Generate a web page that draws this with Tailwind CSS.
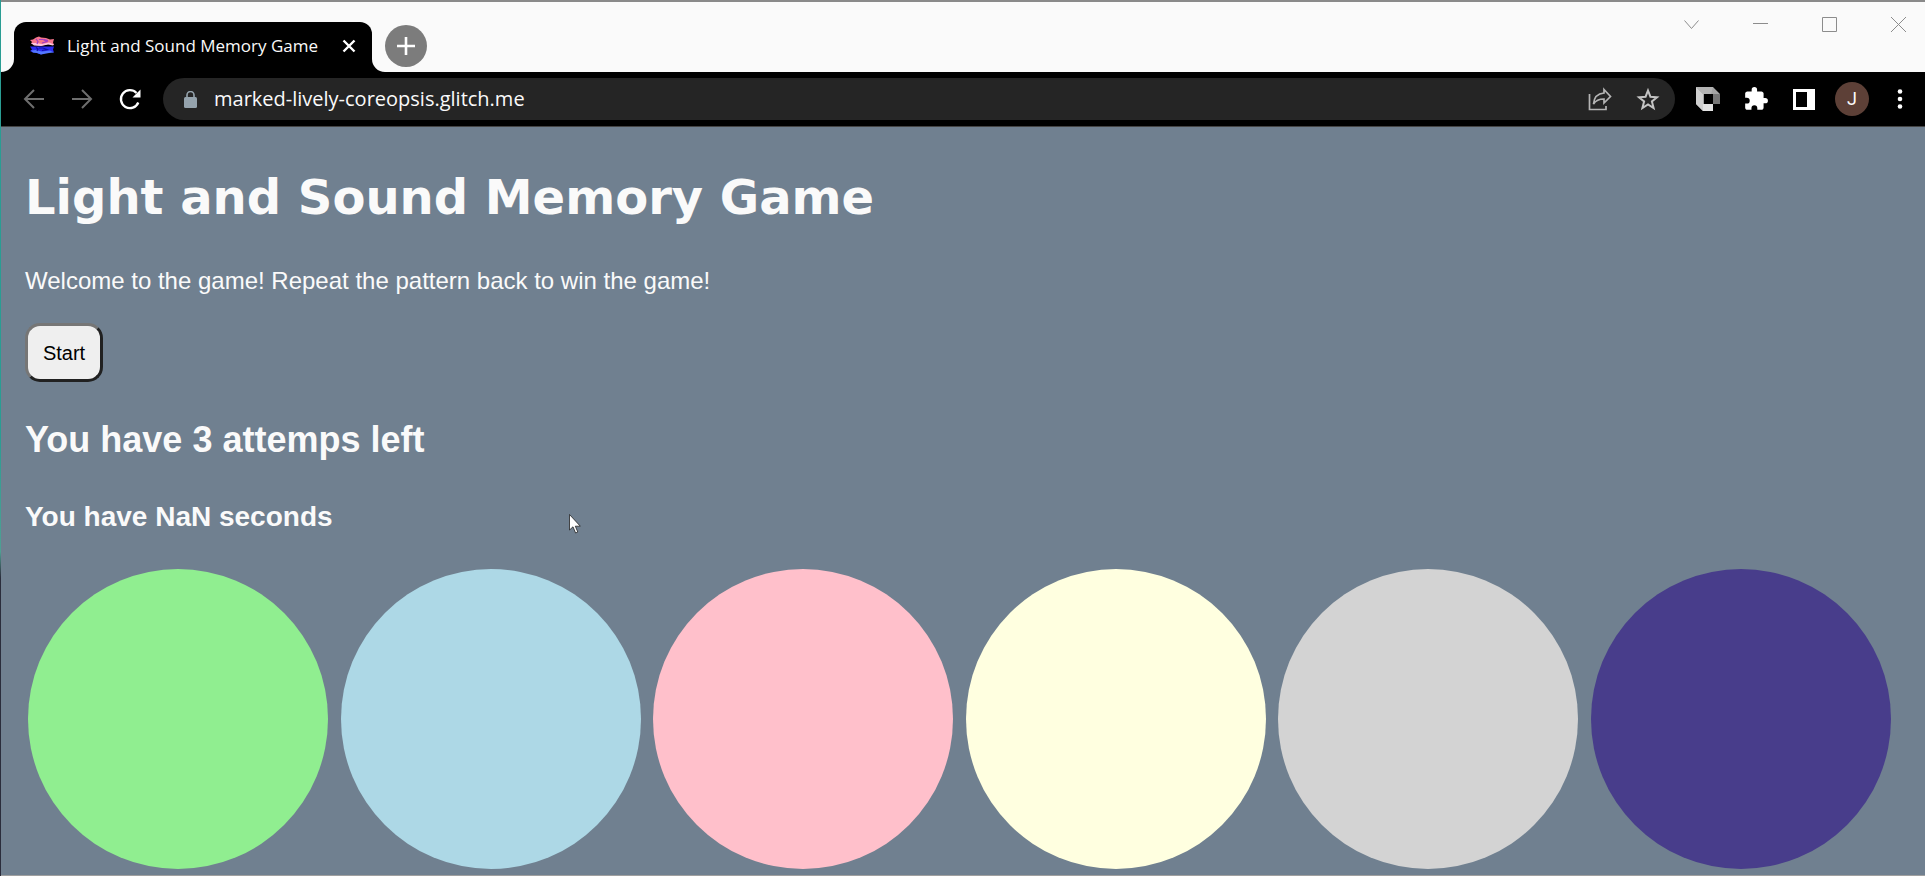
<!DOCTYPE html>
<html lang="en">
<head>
<meta charset="utf-8">
<meta name="viewport" content="width=device-width, initial-scale=1">
<title>Light and Sound Memory Game</title>
<script src="https://cdn.jsdelivr.net/npm/@tailwindcss/browser@4"></script>
</head>
<body class="flex min-h-screen bg-[#708090] font-['Liberation_Sans',Arial,sans-serif] text-[#fafafa]">
<div class="w-px shrink-0 bg-linear-to-b from-[#2a9d93] from-50% via-[#4f9f93] via-63% to-[#2b2d3c] to-66%"></div>
<div class="flex min-w-0 grow flex-col border-b border-[#a0a0a0]">
  <header class="font-['Open_Sans','Noto_Sans',sans-serif]">
    <!-- title bar -->
    <div class="flex h-[72px] items-end border-t-2 border-[#8a8a8a] bg-[#fafafa]">
      <svg class="size-[13px] shrink-0" viewBox="0 0 13 13"><path d="M13 0A13 13 0 0 1 0 13H13Z" fill="#000"/></svg>
      <div class="flex h-[50px] w-[358px] items-center rounded-t-[12px] bg-black pr-4 pb-[2px] pl-4">
        <svg class="size-6 shrink-0" viewBox="0 0 24 24">
          <path d="M0 6 3 5.500 6 3.500 9 2.500l2 1 5 .500 4 1.500L24 5l-1 3.500 1 2.500-5-1L12 11.500 5 11 1 9.500 2 8Z" fill="#f5768c"/>
          <path d="M1 9 6 9l6 1 7-1.500 5 2-1 1-5-1-7 1.500L4 11.500Z" fill="#ffc3df"/>
          <path d="M6 5 8 7.500 7 10M9 5.500h4l4 2-5 1.500M14 5.500l4 1" fill="none" stroke="#a43bc4" stroke-width="1.200"/>
          <path d="M0 12.500h24l-1 3 1 3-4-1-5 1.500-4 1.500-4-1.500-4-.500-3-1.500 2-1.500Z" fill="#2b2bf0"/>
          <path d="M1 16.500 6 16l6 1.500 8-1 4 2-5 .500-8 1.500-4-1.500-4-.500Z" fill="#5277ff"/>
          <path d="M6 13.500 8 15 7 17M9 14h4l4 1.500-5 1" fill="none" stroke="#1010a8" stroke-width="1.200"/>
        </svg>
        <span class="ml-[13px] grow text-[17px] leading-6 whitespace-nowrap">Light and Sound Memory Game</span>
        <button aria-label="Close tab" class="size-[14px] shrink-0"><svg viewBox="0 0 14 14" fill="none" stroke="#fff" stroke-width="2.400"><path d="m1.500 1.500 11 11m0-11-11 11"/></svg></button>
      </div>
      <svg class="size-[13px] shrink-0" viewBox="0 0 13 13"><path d="M0 0A13 13 0 0 0 13 13H0Z" fill="#000"/></svg>
      <button aria-label="New tab" class="mb-[5px] grid size-[42px] shrink-0 place-items-center rounded-full bg-[#7c7c7c]"><svg class="size-[18px]" viewBox="0 0 18 18" fill="none" stroke="#fff" stroke-width="2.600"><path d="M9 0v18M0 9h18"/></svg></button>
      <div class="mr-[19px] mb-[40px] ml-auto flex gap-[54px] text-[#8c8c8c]">
        <button aria-label="Search tabs" class="size-[15px]"><svg viewBox="0 0 15 15" fill="none" stroke="currentColor"><path d="m.500 3.500 7 8 7-8"/></svg></button>
        <button aria-label="Minimize" class="size-[15px]"><svg viewBox="0 0 15 15" fill="none" stroke="currentColor"><path d="M0 6.500h15"/></svg></button>
        <button aria-label="Maximize" class="size-[15px]"><svg viewBox="0 0 15 15" fill="none" stroke="currentColor"><path d="M.500.500h14v14H.500Z"/></svg></button>
        <button aria-label="Close window" class="size-[15px]"><svg viewBox="0 0 15 15" fill="none" stroke="currentColor"><path d="m0 0 15 15m0-15L0 15"/></svg></button>
      </div>
    </div>
    <!-- toolbar -->
    <div class="flex h-[55px] items-center border-b border-[#444] bg-black pr-px pl-[9px]">
      <button aria-label="Back" class="grid w-12 shrink-0 place-items-center"><svg class="size-6" viewBox="0 0 24 24" fill="none" stroke="#6e6e6e" stroke-width="2"><path d="M22 12H3M12 3l-9 9 9 9"/></svg></button>
      <button aria-label="Forward" class="grid w-12 shrink-0 place-items-center"><svg class="size-6" viewBox="0 0 24 24" fill="none" stroke="#6e6e6e" stroke-width="2"><path d="M2 12h19M12 3l9 9-9 9"/></svg></button>
      <button aria-label="Reload" class="grid w-12 shrink-0 place-items-center"><svg class="size-6" viewBox="0 0 24 24"><path d="M20.300 15.500A9 9 0 1 1 18.500 6" fill="none" stroke="#fff" stroke-width="2.300"/><path d="M22.500 2.500V10.500h-8Z" fill="#fff"/></svg></button>
      <div class="mx-[9px] flex h-[42px] grow items-center rounded-full bg-[#252525] pr-[15px] pl-[21px]">
        <svg class="h-[17px] w-[13px] shrink-0" viewBox="0 0 13 17"><rect y="6" width="13" height="11" rx="1.500" fill="#95a3ad"/><path d="M3 7V4a3.500 3.500 0 0 1 7 0v3" fill="none" stroke="#95a3ad" stroke-width="1.600"/></svg>
        <input aria-label="Address" value="marked-lively-coreopsis.glitch.me" class="ml-[17px] h-7 min-w-0 grow bg-transparent text-[20px] leading-7 outline-none">
        <button aria-label="Share" class="ml-6 size-6 shrink-0"><svg viewBox="0 0 24 24" fill="none" stroke="#b5b5b5" stroke-width="1.700"><path d="M1.500 7v15.500H18V19"/><path d="M16 2.500 22.500 9.500 16 16v-4c-5 0-8 1-10.500 5 .500-6 4-10.500 10.500-11Z"/></svg></button>
        <button aria-label="Bookmark" class="ml-6 size-6 shrink-0"><svg viewBox="0 0 24 24" fill="none" stroke="#c4c4c4" stroke-width="2"><path d="m12 3.500 2.400 6.200 6.600.500-5.100 4.200 1.700 6.600-5.600-3.600L6.400 21l1.700-6.600L3 10.200l6.600-.500Z"/></svg></button>
      </div>
      <button aria-label="Search image" class="grid w-12 shrink-0 place-items-center"><svg class="size-6" viewBox="0 0 24 24"><path d="M0 0h17l7 7v10h-7v7H7l-7-7Z" fill="#a5a5a5"/><path d="m0 0 7 7v17l-7-7Z" fill="#d0d0d0"/><path d="M0 0h17l-2 7H7Z" fill="#b4b4b4"/><path d="M17 7h7v10h-7Z" fill="#777"/><path d="M7 17h10v7H7Z" fill="#e4e4e4"/><path d="M8 7h9v10H8Z" fill="#000"/></svg></button>
      <button aria-label="Extensions" class="grid w-12 shrink-0 place-items-center"><svg class="size-[26px]" viewBox="0 0 24 24" fill="#fff"><path d="M20.500 11H19V7c0-1.100-.900-2-2-2h-4V3.500a2.500 2.500 0 0 0-5 0V5H4c-1.100 0-2 .900-2 2v3.800h1.500a2.700 2.700 0 0 1 0 5.400H2V20c0 1.100.900 2 2 2h3.800v-1.500a2.700 2.700 0 0 1 5.400 0V22H17c1.100 0 2-.900 2-2v-4h1.500a2.500 2.500 0 0 0 0-5Z"/></svg></button>
      <button aria-label="Side panel" class="grid w-12 shrink-0 place-items-center"><svg class="h-[21px] w-[22px]" viewBox="0 0 22 21"><path d="M0 0h22v21H0Zm3 3v15h11V3Z" fill="#fff" fill-rule="evenodd"/></svg></button>
      <button aria-label="Profile" class="grid w-12 shrink-0 place-items-center"><span class="grid size-[34px] place-items-center rounded-full bg-[#5d4037] font-['Roboto',sans-serif] text-[18px] leading-6">J</span></button>
      <button aria-label="Menu" class="grid w-12 shrink-0 place-items-center"><svg class="h-[20px] w-1" viewBox="0 0 4 20" overflow="visible" fill="#fff"><circle cx="2" cy="2.500" r="2.300"/><circle cx="2" cy="10" r="2.300"/><circle cx="2" cy="17.500" r="2.300"/></svg></button>
    </div>
  </header>

  <main class="grow px-6 pt-[41px] pb-[5px]">
    <h1 class="font-['DejaVu_Sans',Verdana,sans-serif] text-[48px] leading-[58px] font-bold">Light and Sound Memory Game</h1>
    <p class="mt-[41px] text-[24px] leading-[28px]">Welcome to the game! Repeat the pattern back to win the game!</p>
    <button class="mt-[28px] block h-[59px] w-[78px] rounded-[15px] border-[3px] border-t-[#767676] border-r-[#212121] border-b-[#212121] border-l-[#767676] bg-[#efefef] text-[20px] leading-6 text-black">Start</button>
    <h2 class="mt-[37px] text-[36px] leading-[42px] font-bold">You have 3 attemps left</h2>
    <h3 class="mt-[40px] text-[28px] leading-[32px] font-bold">You have NaN seconds</h3>
    <div class="mt-[36px] mr-[10px] ml-[3px] flex justify-between">
      <button aria-label="Green" class="size-[300px] rounded-full bg-[#90ee90]"></button>
      <button aria-label="Blue" class="size-[300px] rounded-full bg-[#add8e6]"></button>
      <button aria-label="Pink" class="size-[300px] rounded-full bg-[#ffc0cb]"></button>
      <button aria-label="Yellow" class="size-[300px] rounded-full bg-[#ffffe0]"></button>
      <button aria-label="Grey" class="size-[300px] rounded-full bg-[#d3d3d3]"></button>
      <button aria-label="Purple" class="size-[300px] rounded-full bg-[#483d8b]"></button>
    </div>
  </main>
</div>
<!-- mouse pointer -->
<svg class="pointer-events-none absolute top-[514px] left-[569px] h-[20px] w-[12px]" viewBox="0 0 12 20"><path d="M.500.500v15.500l3.500-3.200 2.600 6.200 2.200-1-2.500-5.800h5Z" fill="#fff" stroke="#222" stroke-width=".800"/></svg>
</body>
</html>
